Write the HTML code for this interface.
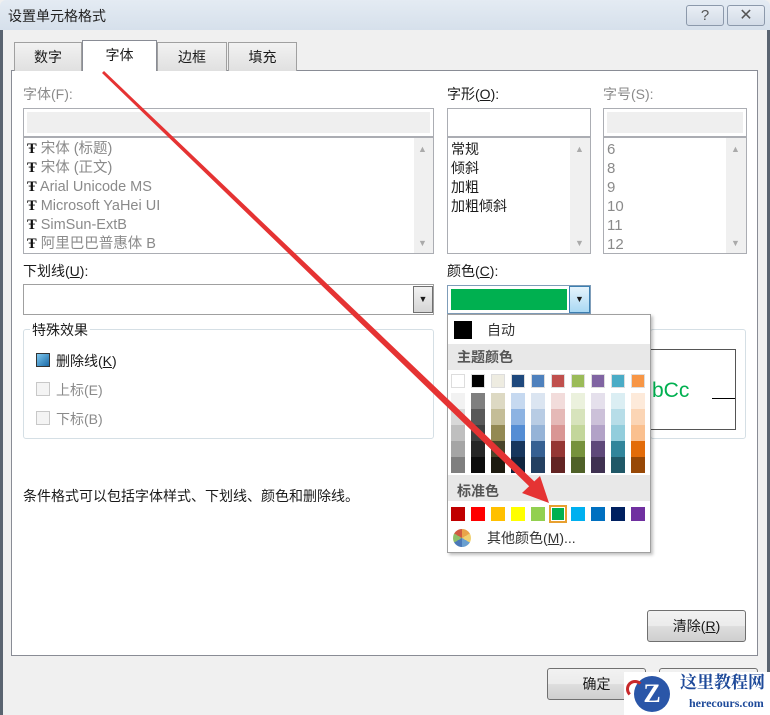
<!DOCTYPE html><html><head><meta charset="utf-8"><style>
*{margin:0;padding:0;box-sizing:border-box}
body{width:770px;height:715px;overflow:hidden;background:#f0f0f0;font-family:"Liberation Sans","Microsoft YaHei","Noto Sans CJK SC",sans-serif;font-size:14px;color:#1a1a1a;position:relative}
.a{position:absolute}
.t{position:absolute;white-space:nowrap;line-height:18px}
.g{color:#8a8a8a}
.box{position:absolute;border:1px solid #abadb3;background:#fff}
.tab{position:absolute;top:42px;height:29px;border:1px solid #a0a0a0;border-bottom:none;background:linear-gradient(#f2f2f2,#e0e0e0);text-align:center;line-height:28px;font-size:14px}
.sb{position:absolute;background:#f0f0f0}
.btn{position:absolute;border:1px solid #707070;border-radius:3px;background:linear-gradient(#f2f2f2 0%,#ebebeb 50%,#dddddd 51%,#cfcfcf 100%);text-align:center;line-height:30px}
.sw{position:absolute;width:14px;height:14px}
u{text-decoration:underline}
</style></head><body>
<div class="a" style="left:0;top:0;width:770px;height:30px;background:linear-gradient(#e4ebf3,#d6e0eb);border-radius:6px 6px 0 0"></div>
<div class="t" style="left:8px;top:7px;font-size:14px;color:#222">设置单元格格式</div>
<div class="a" style="left:686px;top:5px;width:38px;height:21px;border:1px solid #8c99ab;border-radius:3px;background:linear-gradient(#e9eef5,#d3dce7);text-align:center;font-size:15px;line-height:19px;color:#555">?</div>
<div class="a" style="left:727px;top:5px;width:38px;height:21px;border:1px solid #8c99ab;border-radius:3px;background:linear-gradient(#e9eef5,#d3dce7);text-align:center;font-size:16px;line-height:19px;color:#555">✕</div>
<div class="a" style="left:0;top:30px;width:3px;height:685px;background:#5a6470"></div>
<div class="a" style="left:767px;top:30px;width:3px;height:685px;background:#5a6470"></div>

<div class="a" style="left:11px;top:70px;width:747px;height:586px;background:#fff;border:1px solid #898c95"></div>
<div class="tab" style="left:14px;width:68px">数字</div>
<div class="tab" style="left:82px;top:40px;height:31px;width:75px;background:#fff;border-color:#898c95">字体</div>
<div class="tab" style="left:157px;width:70px">边框</div>
<div class="tab" style="left:228px;width:69px">填充</div>

<div class="t g" style="left:23px;top:85px">字体(F):</div>
<div class="box" style="left:23px;top:108px;width:411px;height:29px"><div class="a" style="left:3px;top:3px;right:3px;bottom:3px;background:#efefef"></div></div>
<div class="box" style="left:23px;top:137px;width:411px;height:117px"></div>
<div class="sb" style="left:414px;top:138px;width:19px;height:115px"></div>
<div class="t" style="left:418px;top:140px;font-size:9px;color:#aaa">▲</div>
<div class="t" style="left:418px;top:234px;font-size:9px;color:#aaa">▼</div>
<div class="t g" style="left:27px;top:140px;line-height:19px;font-size:14.5px">
<div><b style="color:#111;font-family:'Liberation Serif'">Ŧ</b> 宋体 (标题)</div>
<div><b style="color:#111;font-family:'Liberation Serif'">Ŧ</b> 宋体 (正文)</div>
<div><b style="color:#111;font-family:'Liberation Serif'">Ŧ</b> Arial Unicode MS</div>
<div><b style="color:#111;font-family:'Liberation Serif'">Ŧ</b> Microsoft YaHei UI</div>
<div><b style="color:#111;font-family:'Liberation Serif'">Ŧ</b> SimSun-ExtB</div>
<div><b style="color:#111;font-family:'Liberation Serif'">Ŧ</b> 阿里巴巴普惠体 B</div></div>

<div class="t" style="left:447px;top:85px">字形(<u>O</u>):</div>
<div class="box" style="left:447px;top:108px;width:144px;height:29px"></div>
<div class="box" style="left:447px;top:137px;width:144px;height:117px"></div>
<div class="sb" style="left:570px;top:138px;width:20px;height:115px"></div>
<div class="t" style="left:575px;top:140px;font-size:9px;color:#aaa">▲</div>
<div class="t" style="left:575px;top:234px;font-size:9px;color:#aaa">▼</div>
<div class="t" style="left:451px;top:140px;line-height:19px"><div>常规</div><div>倾斜</div><div>加粗</div><div>加粗倾斜</div></div>

<div class="t g" style="left:603px;top:85px">字号(S):</div>
<div class="box" style="left:603px;top:108px;width:144px;height:29px"><div class="a" style="left:3px;top:3px;right:3px;bottom:3px;background:#efefef"></div></div>
<div class="box" style="left:603px;top:137px;width:144px;height:117px"></div>
<div class="sb" style="left:726px;top:138px;width:20px;height:115px"></div>
<div class="t" style="left:731px;top:140px;font-size:9px;color:#aaa">▲</div>
<div class="t" style="left:731px;top:234px;font-size:9px;color:#aaa">▼</div>
<div class="t g" style="left:607px;top:140px;line-height:19px;font-size:15px"><div>6</div><div>8</div><div>9</div><div>10</div><div>11</div><div>12</div></div>

<div class="t" style="left:23px;top:262px">下划线(<u>U</u>):</div>
<div class="box" style="left:23px;top:284px;width:411px;height:31px;border-color:#a0a0a0"></div>
<div class="a" style="left:413px;top:286px;width:20px;height:27px;border:1px solid #707070;background:linear-gradient(#f2f2f2,#d5d5d5);text-align:center;font-size:9px;line-height:25px">▼</div>

<div class="a" style="left:23px;top:329px;width:411px;height:110px;border:1px solid #d5dfe5;border-radius:3px"></div>
<div class="t" style="left:30px;top:321px;background:#fff;padding:0 2px">特殊效果</div>
<div class="a" style="left:36px;top:353px;width:14px;height:14px;border:1px solid #333;background:linear-gradient(135deg,#7ec8ee,#1b6aa8)"></div>
<div class="t" style="left:56px;top:352px">删除线(<u>K</u>)</div>
<div class="a" style="left:36px;top:382px;width:14px;height:14px;border:1px solid #c8c8c8;background:#f4f4f4"></div>
<div class="t g" style="left:56px;top:381px">上标(E)</div>
<div class="a" style="left:36px;top:411px;width:14px;height:14px;border:1px solid #c8c8c8;background:#f4f4f4"></div>
<div class="t g" style="left:56px;top:410px">下标(B)</div>

<div class="t" style="left:23px;top:487px">条件格式可以包括字体样式、下划线、颜色和删除线。</div>

<div class="t" style="left:447px;top:262px">颜色(<u>C</u>):</div>
<div class="box" style="left:447px;top:285px;width:144px;height:29px;border-color:#7f9db9"></div>
<div class="a" style="left:451px;top:289px;width:116px;height:21px;background:#00b050"></div>
<div class="a" style="left:569px;top:286px;width:21px;height:27px;border:1px solid #3c7fb1;background:linear-gradient(#e5f4fc,#a9d8f3);text-align:center;font-size:9px;line-height:25px">▼</div>

<div class="a" style="left:650px;top:329px;width:96px;height:110px;border:1px solid #d5dfe5;border-radius:3px"></div>
<div class="a" style="left:650px;top:349px;width:86px;height:81px;border:1px solid #555;border-left:none"></div>
<div class="t" style="left:652px;top:378px;font-size:21px;line-height:26px;color:#00b050">bCc</div>
<div class="a" style="left:712px;top:398px;width:23px;height:1px;background:#000"></div>

<div class="a" style="left:447px;top:314px;width:204px;height:239px;background:#fff;border:1px solid #a0a0a0;box-shadow:2px 2px 3px rgba(0,0,0,.25)"></div>
<div class="a" style="left:454px;top:321px;width:18px;height:18px;background:#000"></div>
<div class="t" style="left:487px;top:321px;color:#333">自动</div>
<div class="a" style="left:448px;top:344px;width:202px;height:26px;background:#e8e8e8"></div>
<div class="t" style="left:457px;top:348px;font-weight:bold;color:#555">主题颜色</div>
<div class="a" style="left:448px;top:475px;width:202px;height:26px;background:#e8e8e8"></div>
<div class="t" style="left:457px;top:482px;font-weight:bold;color:#555">标准色</div>
<div id="pal"></div>
<div class="a" style="left:453px;top:529px;width:18px;height:18px;border-radius:50%;background:conic-gradient(#e9a44a 0 60deg,#f0d070 60deg 120deg,#6a9fd0 120deg 180deg,#4a78b8 180deg 240deg,#8fbf6a 240deg 300deg,#d05a40 300deg)"></div>
<div class="t" style="left:487px;top:529px;color:#333">其他颜色(<u>M</u>)...</div>

<div class="btn" style="left:647px;top:610px;width:99px;height:32px">清除(<u>R</u>)</div>
<div class="btn" style="left:547px;top:668px;width:99px;height:32px">确定</div>
<div class="btn" style="left:659px;top:668px;width:99px;height:32px"></div>

<svg class="a" style="left:0;top:0" width="770" height="715"><polygon points="102,73 104,71 537,484 532,489" fill="#e53333"/><polygon points="549,503 522,493 540,476" fill="#e53333"/></svg>

<div class="a" style="left:624px;top:672px;width:146px;height:43px;background:#fff"></div>
<div class="a" style="left:634px;top:676px;width:36px;height:36px;border-radius:50%;background:#2a56a8;color:#fff;font-weight:bold;font-size:26px;text-align:center;line-height:36px;font-family:'Liberation Serif',serif">Z</div>
<div class="a" style="left:626px;top:680px;width:18px;height:18px;border:3px solid #c8282a;border-radius:50%;border-right-color:transparent;border-bottom-color:transparent"></div>
<div class="t" style="left:680px;top:674px;font-size:17px;font-weight:bold;color:#1e4a9a;font-family:'Liberation Serif','Noto Serif CJK SC',serif">这里教程网</div>
<div class="t" style="left:689px;top:694px;font-size:12px;font-weight:bold;color:#1e4a9a;font-family:'Liberation Serif',serif">herecours.com</div>

<script>
var th=['#ffffff','#000000','#eeece1','#1f497d','#4f81bd','#c0504d','#9bbb59','#8064a2','#4bacc6','#f79646'];
var sh=[['#f2f2f2','#d8d8d8','#bfbfbf','#a5a5a5','#7f7f7f'],['#7f7f7f','#595959','#3f3f3f','#262626','#0c0c0c'],['#ddd9c3','#c4bd97','#938953','#494429','#1d1b10'],['#c6d9f0','#8db3e2','#548dd4','#17365d','#0f243e'],['#dbe5f1','#b8cce4','#95b3d7','#366092','#244061'],['#f2dcdb','#e5b9b7','#d99694','#953734','#632423'],['#ebf1dd','#d7e3bc','#c3d69b','#76923c','#4f6128'],['#e5e0ec','#ccc1d9','#b2a2c7','#5f497a','#3f3151'],['#dbeef3','#b7dde8','#92cddc','#31859b','#205867'],['#fdeada','#fbd5b5','#fac08f','#e36c09','#974806']];
var st=['#c00000','#ff0000','#ffc000','#ffff00','#92d050','#00b050','#00b0f0','#0070c0','#002060','#7030a0'];
var h='';
for(var i=0;i<10;i++){var x=451+i*20;
h+='<div class="sw" style="left:'+x+'px;top:374px;background:'+th[i]+';border:1px solid #ddd"></div>';
for(var j=0;j<5;j++)h+='<div class="sw" style="left:'+x+'px;top:'+(393+j*16)+'px;height:16px;background:'+sh[i][j]+'"></div>';
h+='<div class="sw" style="left:'+x+'px;top:507px;background:'+st[i]+(i==5?';outline:2px solid #e8a030;outline-offset:0;border:1px solid #fff':'')+'"></div>';}
document.getElementById('pal').innerHTML=h;
</script>
</body></html>
